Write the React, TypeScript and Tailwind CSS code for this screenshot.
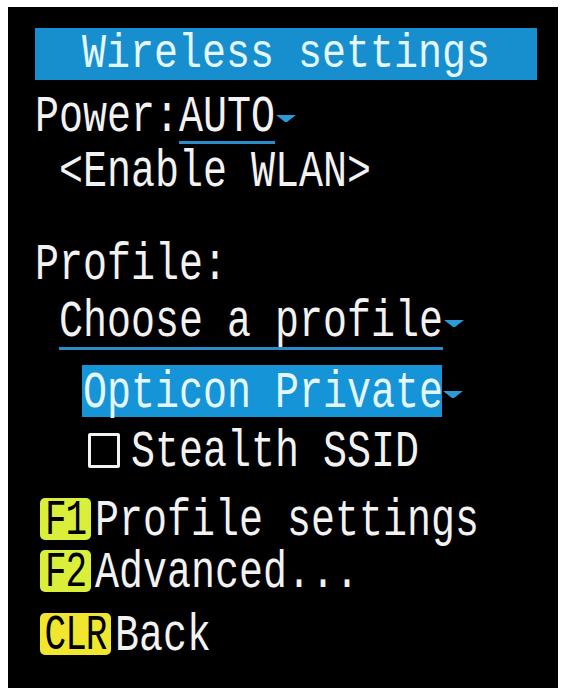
import React from 'react';

const T = 'inline-block scale-y-[1.3] translate-y-[3px] whitespace-pre';
const TK = 'inline-block leading-[34px] scale-y-[1.3] translate-y-[3px] whitespace-pre ml-[4px]';

const Arrow: React.FC = () => (
  <svg width="24" height="40" viewBox="0 0 24 40" className="block shrink-0">
    <polygon points="1,20 21,20 12,27 10,27" fill="#2a9ad8" />
  </svg>
);

const Key: React.FC<{ label: string; w: string; color: string }> = ({ label, w, color }) => (
  <div className={`ml-[5px] ${w} h-[42px] rounded-[5px] ${color} flex items-center justify-center text-black text-[36px] leading-none`}>
    <span className="inline-block scale-y-[1.4] translate-y-[2px] tracking-[-1px]">{label}</span>
  </div>
);

const App: React.FC = () => {
  return (
    <div className="w-[565px] h-[690px] bg-white pt-[7px] pl-[8px]">
      <div className="w-[550px] h-[681px] bg-black pt-[21px] pl-[27px] font-['Liberation_Mono',monospace] text-[40px] leading-10 text-[#f2f2f2]">
        {/* Title bar */}
        <div className="w-[502px] h-[52px] bg-[#178fcf] flex items-center justify-center pb-[4px] text-[#e4f7ff]">
          <span className="inline-block scale-y-[1.2] translate-y-[3px] whitespace-pre">Wireless settings</span>
        </div>

        {/* Power */}
        <div className="mt-[15px] flex items-start">
          <span className={T}>Power:</span>
          <div className="pb-[6px] border-b-[3px] border-[#2a8ccb]">
            <span className={T}>AUTO</span>
          </div>
          <Arrow />
        </div>
        <div className="mt-[6px] h-10">
          <span className={T}> &lt;Enable WLAN&gt;</span>
        </div>

        {/* Profile */}
        <div className="mt-[53px] h-10">
          <span className={T}>Profile:</span>
        </div>
        <div className="mt-[17px] ml-[24px] flex items-start">
          <div className="pb-[7px] border-b-[3px] border-[#2a8ccb]">
            <span className={T}>Choose a profile</span>
          </div>
          <Arrow />
        </div>
        <div className="mt-[15px] ml-[47px] flex items-center">
          <div className="w-[360px] h-[52px] bg-[#1594d8] flex items-center pl-[1px] text-[#e4f7ff]">
            <span className={T}>Opticon Private</span>
          </div>
          <Arrow />
        </div>
        <div className="mt-[13px] ml-[48px] h-10 flex items-center">
          <div className="w-[48px] flex items-center">
            <div className="ml-[5px] w-[32px] h-[35px] border-[3px] border-[#f2f2f2] rounded-[2px]"></div>
          </div>
          <span className={T}>Stealth SSID</span>
        </div>

        {/* Function keys */}
        <div className="mt-[28px] h-[42px] flex items-center">
          <Key label="F1" w="w-[51px]" color="bg-[#d9ef3a]" />
          <span className={TK}>Profile settings</span>
        </div>
        <div className="mt-[10px] h-[42px] flex items-center">
          <Key label="F2" w="w-[51px]" color="bg-[#d9ef3a]" />
          <span className={TK}>Advanced...</span>
        </div>
        <div className="mt-[21px] h-[42px] flex items-center">
          <Key label="CLR" w="w-[71px]" color="bg-[#f0e62e]" />
          <span className={TK}>Back</span>
        </div>
      </div>
    </div>
  );
};

export default App;
